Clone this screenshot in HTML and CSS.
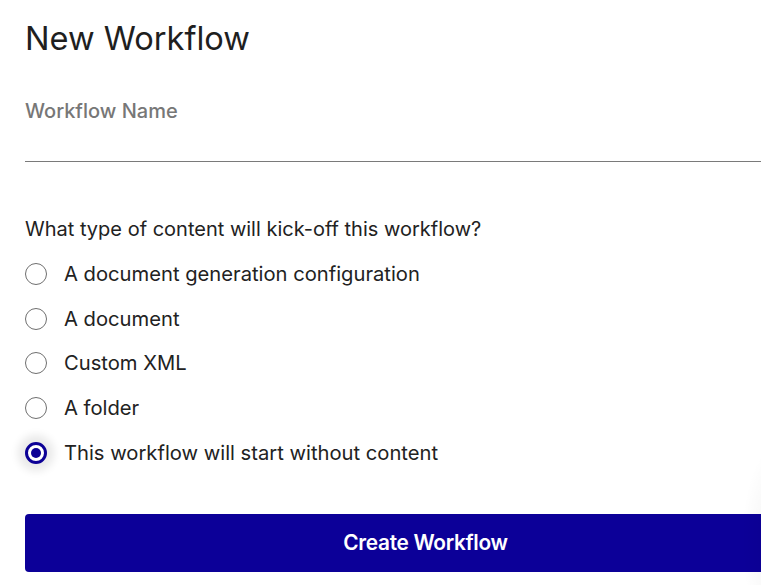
FILE: index.html
```html
<!DOCTYPE html>
<html>
<head>
<meta charset="utf-8">
<link rel="stylesheet" href="styles.css">
</head>
<body>
<div class="page">
  <div class="panel">
    <h1 class="title">New Workflow</h1>
    <div class="field">
      <label class="field-label">Workflow Name</label>
      <div class="field-line"></div>
    </div>
    <p class="question">What type of content will kick-off this workflow?</p>
    <div class="options">
      <div class="option"><span class="radio"></span><span class="opt-text">A document generation configuration</span></div>
      <div class="option"><span class="radio"></span><span class="opt-text">A document</span></div>
      <div class="option"><span class="radio"></span><span class="opt-text">Custom XML</span></div>
      <div class="option"><span class="radio"></span><span class="opt-text">A folder</span></div>
      <div class="option"><span class="radio checked"></span><span class="opt-text">This workflow will start without content</span></div>
    </div>
    <button class="create">Create Workflow</button>
  </div>
  <div class="edge-shadow"></div>
</div>
</body>
</html>
```
FILE: styles.css
```css
html, body {
  margin: 0;
  padding: 0;
  background: #ffffff;
  overflow: hidden;
  width: 761px;
  height: 585px;
}
.page {
  position: relative;
  width: 761px;
  height: 585px;
  overflow: hidden;
}
.panel {
  width: 801px;
  padding: 18px 0 0 25px;
  font-family: "Inter", "Liberation Sans", sans-serif;
  color: #222222;
}
.title {
  margin: 0;
  font-size: 32.6px;
  font-weight: 400;
  line-height: 40px;
  color: #1f1f1f;
}
.field {
  margin-top: 41px;
}
.field-label {
  display: block;
  font-size: 20px;
  line-height: 24px;
  color: #777777;
  font-weight: 500;
}
.field-line {
  margin-top: 38px;
  height: 1px;
  background: #7a7a7a;
}
.question {
  margin: 55px 0 0 0;
  font-size: 20px;
  line-height: 24px;
  color: #222222;
}
.options {
  margin-top: 11px;
  display: flex;
  flex-direction: column;
}
.option {
  display: flex;
  align-items: center;
  height: 44.6px;
}
.radio {
  box-sizing: border-box;
  width: 22px;
  height: 22px;
  border-radius: 50%;
  border: 1px solid #6f6f6f;
  margin-right: 17px;
  flex: none;
  position: relative;
}
.radio.checked {
  border: 3px solid #0c0096;
  background: #ffffff;
  box-shadow: 0 0 9px 7px rgba(0, 0, 0, 0.09);
}
.radio.checked::after {
  content: "";
  position: absolute;
  left: 3px;
  top: 3px;
  width: 10px;
  height: 10px;
  border-radius: 50%;
  background: #0c0096;
}
.opt-text {
  font-size: 20.2px;
  line-height: 24px;
  color: #222222;
}
.create {
  display: block;
  margin-top: 39px;
  width: 801px;
  height: 58px;
  border: none;
  border-radius: 4px;
  background: #0c0098;
  color: #ffffff;
  font-family: "Inter", "Liberation Sans", sans-serif;
  font-size: 20.8px;
  font-weight: 600;
  letter-spacing: -0.3px;
}
.edge-shadow {
  position: absolute;
  right: -20px;
  top: 440px;
  width: 40px;
  height: 200px;
  background: radial-gradient(ellipse at right center, rgba(0,0,0,0.06), rgba(0,0,0,0) 70%);
  pointer-events: none;
}
```
